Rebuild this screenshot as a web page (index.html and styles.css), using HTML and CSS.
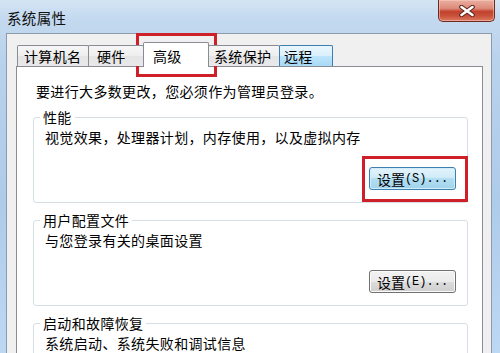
FILE: index.html
```html
<!DOCTYPE html>
<html lang="zh-CN">
<head>
<meta charset="utf-8">
<title>系统属性</title>
<link rel="stylesheet" href="styles.css">
</head>
<body>
<div class="titlebar">
  <div class="title">系统属性</div>
  <div class="close">
    <svg width="16" height="12" viewBox="-8 -6 16 12">
      <path d="M-5.5 -4 L5.5 4 M5.5 -4 L-5.5 4" stroke="#5c2219" stroke-width="4.6" stroke-linecap="round"/>
      <path d="M-5.5 -4 L5.5 4 M5.5 -4 L-5.5 4" stroke="#ffffff" stroke-width="2.6" stroke-linecap="round"/>
    </svg>
  </div>
</div>
<div class="client">
  <div class="tabs">
    <div class="tab t1">计算机名</div>
    <div class="tab t2">硬件</div>
    <div class="tab active">高级</div>
    <div class="tab t4">系统保护</div>
    <div class="tab hover t5">远程</div>
  </div>
  <div class="panel">
    <div class="intro">要进行大多数更改，您必须作为管理员登录。</div>
    <fieldset class="group first">
      <legend>性能</legend>
      <div class="desc">视觉效果，处理器计划，内存使用，以及虚拟内存</div>
      <div class="btnrow"><div class="btn focus">设置<span class="acc">(S)...</span></div></div>
    </fieldset>
    <fieldset class="group">
      <legend>用户配置文件</legend>
      <div class="desc">与您登录有关的桌面设置</div>
      <div class="btnrow"><div class="btn">设置<span class="acc">(E)...</span></div></div>
    </fieldset>
    <fieldset class="group last">
      <legend>启动和故障恢复</legend>
      <div class="desc">系统启动、系统失败和调试信息</div>
    </fieldset>
  </div>
</div>
<div class="mark mark-tab"></div>
<div class="mark mark-btn"></div>
</body>
</html>
```
FILE: styles.css
```css
* { box-sizing: border-box; }
html, body { margin: 0; padding: 0; }
body {
  width: 500px;
  height: 353px;
  overflow: hidden;
  position: relative;
  background: linear-gradient(to bottom, #d4e4f4 0, #c3d9ef 20px, #b9d2ec 60px, #aecbea 200px, #bcd8f3 353px);
  font-family: "Noto Sans CJK SC", "Noto Sans", sans-serif;
  font-size: 14px;
  line-height: 16px;
  letter-spacing: 0.35px;
  color: #000;
}
.titlebar {
  height: 33px;
  display: flex;
  align-items: flex-start;
}
.title {
  padding: 10px 0 0 7px;
  font-size: 14.5px;
  color: #111;
}
.close {
  margin-left: auto;
  margin-right: 5px;
  width: 57px;
  height: 22px;
  border: 1px solid #6e2a20;
  border-top: none;
  border-radius: 0 0 5px 5px;
  background: linear-gradient(to bottom, #eab0a2 0, #dd8a78 40%, #c2432e 55%, #c9503a 75%, #dc7a62 100%);
  box-shadow: inset 0 0 0 1px rgba(255,210,200,0.5);
  display: flex;
  align-items: center;
  justify-content: center;
}
.client {
  margin: 0 8px 0 6px;
  height: 330px;
  background: #f0f0f0;
  border: 1px solid #8d9aab;
  padding: 8px 8px 0 9px;
}
.tabs {
  display: flex;
  align-items: flex-end;
  height: 25px;
  margin-bottom: -1px;
  padding-left: 1px;
  position: relative;
  z-index: 1;
}
.tab {
  height: 21px;
  margin-bottom: 1px;
  margin-left: -1px;
  padding: 2px 0 0 6px;
  border: 1px solid #898c95;
  border-bottom: none;
  border-radius: 2px 2px 0 0;
  background: linear-gradient(to bottom, #f6f6f6, #eeeeee 50%, #e4e4e4 50%, #e9e9e9);
  white-space: nowrap;
}
.t1 { margin-left: 0; width: 72px; }
.t2 { width: 56px; padding-left: 8px; }
.active {
  width: 66px;
  height: 25px;
  margin-bottom: 0;
  padding: 5px 0 0 9px;
  background: #ffffff;
}
.t4 { width: 72px; padding-left: 5px; }
.t5 { width: 54px; padding-left: 4px; }
.tab.hover {
  border-color: #3c7fb1;
  background: linear-gradient(to bottom, #eaf6fd, #d9f0fc 50%, #bee6fd 50%, #a7d9f5);
}
.panel {
  background: #ffffff;
  border: 1px solid #898c95;
  padding: 16px 14px 0 16px;
  height: 300px;
}
.intro { margin-left: 3px; }
.group {
  margin: 9px 0 0 0;
  min-width: 0;
  border: 1px solid #d5dfe5;
  border-radius: 3px;
  padding: 4px 11px 12px 11px;
}
.group.first { margin-top: 10px; }
.group.last { padding-bottom: 4px; }
.group legend {
  padding: 0 3px;
  margin-left: -5px;
  line-height: 16px;
}
.btnrow {
  display: flex;
  justify-content: flex-end;
  margin-top: 22px;
}
.btn {
  width: 87px;
  height: 23px;
  border: 1px solid #707070;
  border-radius: 3px;
  background: linear-gradient(to bottom, #f2f2f2, #ebebeb 50%, #dddddd 50%, #cfcfcf);
  box-shadow: inset 0 0 0 1px #fbfbfb;
  display: flex;
  align-items: center;
  justify-content: center;
  padding-top: 1px;
  letter-spacing: 0;
}
.btn.focus {
  border-color: #3c7fb1;
  background: linear-gradient(to bottom, #e4f3fb, #cdeaf8 50%, #b2def3 50%, #a1d3ec);
  box-shadow: inset 0 0 0 1px #d2ecf8;
}
.acc {
  font-family: "Liberation Mono", "DejaVu Sans Mono", monospace;
  font-size: 12px;
  letter-spacing: 0;
}
.mark {
  position: absolute;
  border: 3px solid #cf1f28;
}
.mark-tab { left: 136px; top: 33px; width: 81px; height: 44px; }
.mark-btn { left: 362px; top: 156px; width: 106px; height: 46px; }
```
